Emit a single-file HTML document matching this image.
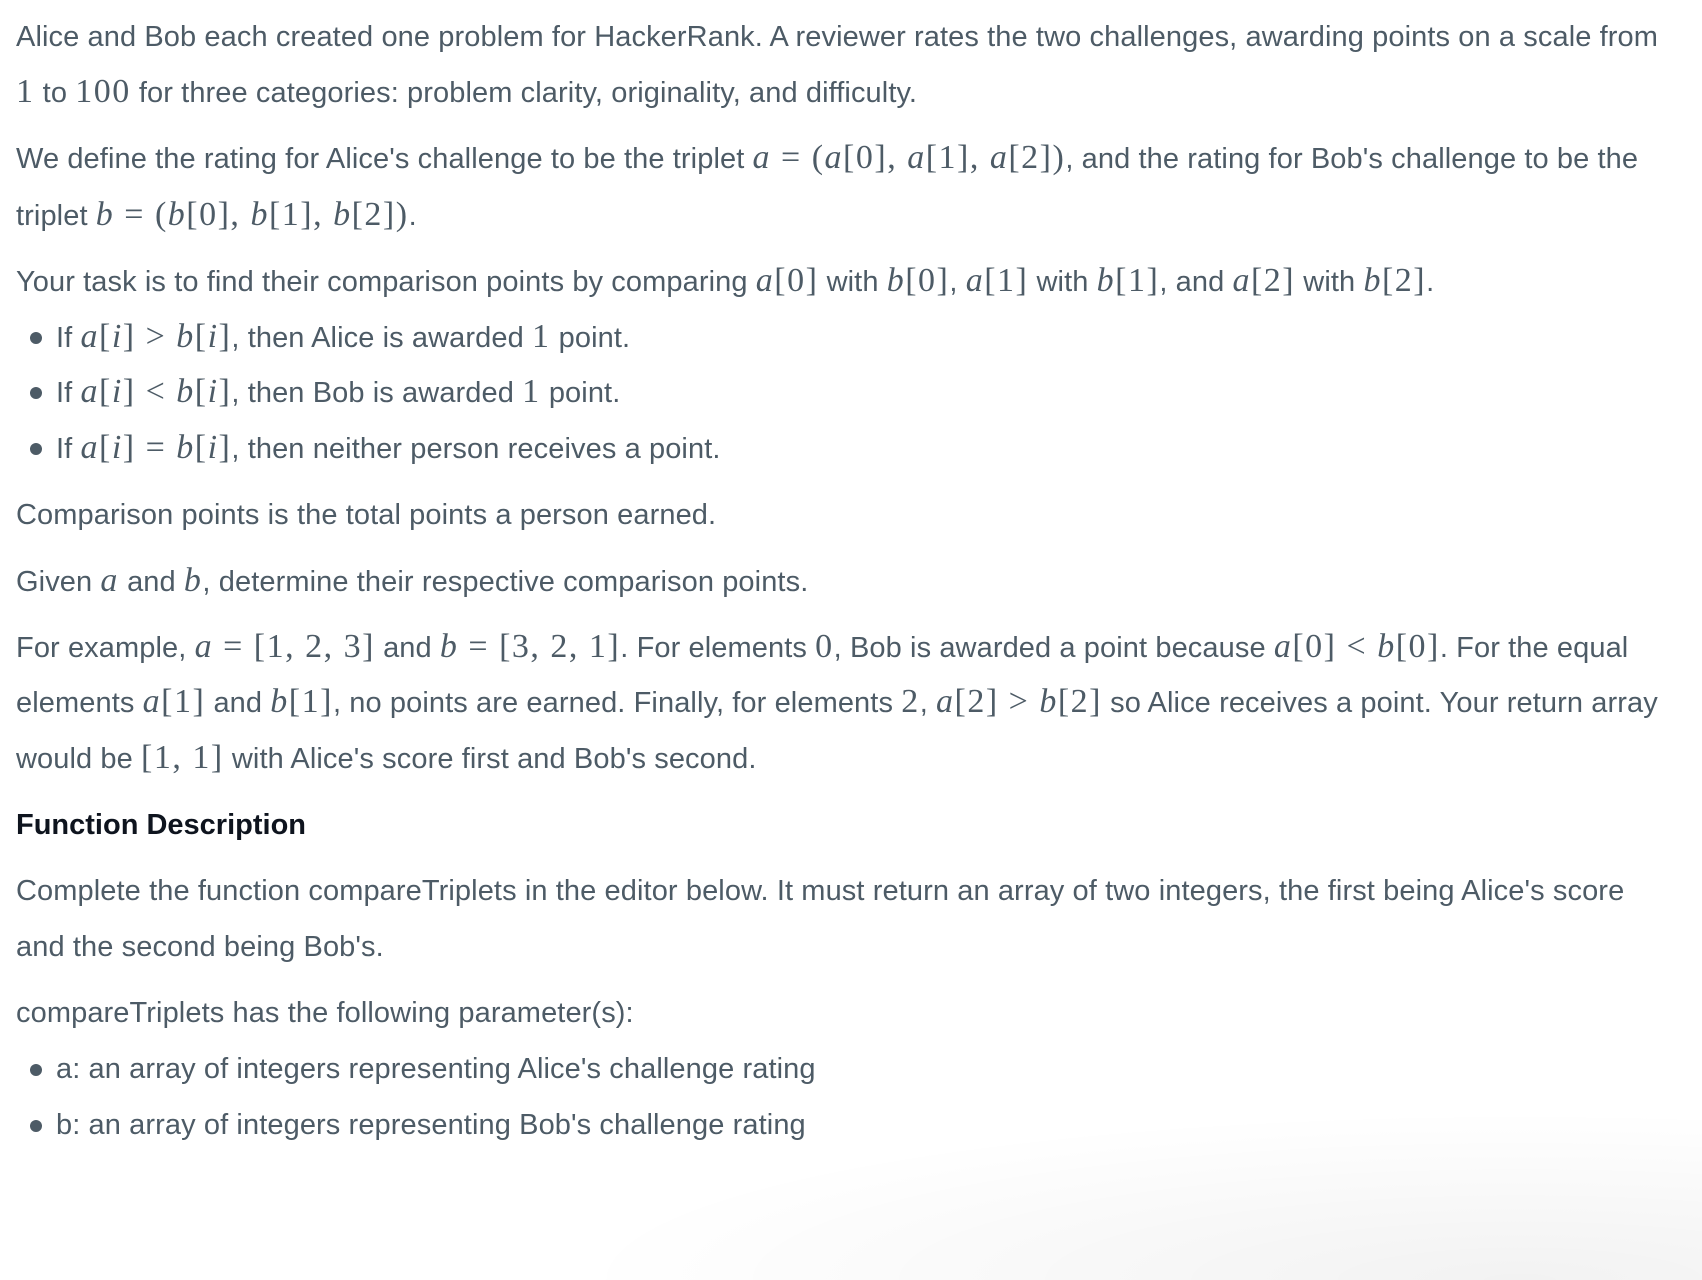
<!DOCTYPE html>
<html><head><meta charset="utf-8"><style>
html,body{margin:0;padding:0;background:#fff;}
body{width:1702px;height:1164px;position:relative;overflow:hidden;font-family:"Liberation Sans",sans-serif;color:#4d5b66;font-size:29px;}
.l{position:absolute;left:16px;height:56px;line-height:56px;white-space:nowrap;letter-spacing:0.1px;}
.b{left:56px;}
.b::before{content:"";position:absolute;left:-26px;top:23px;width:12px;height:12px;border-radius:50%;background:#4d5b66;}
.m{font-family:"Liberation Serif",serif;font-size:34px;letter-spacing:1.5px;}
.m i{font-style:italic;}
h3{position:absolute;left:16px;margin:0;font-size:29px;font-weight:bold;color:#0e141e;line-height:56px;top:797px;}
.fade{position:absolute;left:400px;top:1080px;width:1400px;height:200px;background:radial-gradient(ellipse at 80% 100%,rgba(0,0,0,0.05),rgba(0,0,0,0) 60%);}
</style></head><body>
<div class="l" style="top:9px">Alice and Bob each created one problem for HackerRank. A reviewer rates the two challenges, awarding points on a scale from</div>
<div class="l" style="top:64px"><span class="m">1</span> to <span class="m">100</span> for three categories: problem clarity, originality, and difficulty.</div>
<div class="l" style="top:130px">We define the rating for Alice's challenge to be the triplet <span class="m"><i>a</i> = (<i>a</i>[0], <i>a</i>[1], <i>a</i>[2])</span>, and the rating for Bob's challenge to be the</div>
<div class="l" style="top:187px">triplet <span class="m"><i>b</i> = (<i>b</i>[0], <i>b</i>[1], <i>b</i>[2])</span>.</div>
<div class="l" style="top:253px">Your task is to find their comparison points by comparing <span class="m"><i>a</i>[0]</span> with <span class="m"><i>b</i>[0]</span>, <span class="m"><i>a</i>[1]</span> with <span class="m"><i>b</i>[1]</span>, and <span class="m"><i>a</i>[2]</span> with <span class="m"><i>b</i>[2]</span>.</div>
<div class="l b" style="top:309px">If <span class="m"><i>a</i>[<i>i</i>] &gt; <i>b</i>[<i>i</i>]</span>, then Alice is awarded <span class="m">1</span> point.</div>
<div class="l b" style="top:364px">If <span class="m"><i>a</i>[<i>i</i>] &lt; <i>b</i>[<i>i</i>]</span>, then Bob is awarded <span class="m">1</span> point.</div>
<div class="l b" style="top:420px">If <span class="m"><i>a</i>[<i>i</i>] = <i>b</i>[<i>i</i>]</span>, then neither person receives a point.</div>
<div class="l" style="top:487px">Comparison points is the total points a person earned.</div>
<div class="l" style="top:553px">Given <span class="m"><i>a</i></span> and <span class="m"><i>b</i></span>, determine their respective comparison points.</div>
<div class="l" style="top:619px">For example, <span class="m"><i>a</i> = [1, 2, 3]</span> and <span class="m"><i>b</i> = [3, 2, 1]</span>. For elements <span class="m">0</span>, Bob is awarded a point because <span class="m"><i>a</i>[0] &lt; <i>b</i>[0]</span>. For the equal</div>
<div class="l" style="top:674px">elements <span class="m"><i>a</i>[1]</span> and <span class="m"><i>b</i>[1]</span>, no points are earned. Finally, for elements <span class="m">2</span>, <span class="m"><i>a</i>[2] &gt; <i>b</i>[2]</span> so Alice receives a point. Your return array</div>
<div class="l" style="top:730px">would be <span class="m">[1, 1]</span> with Alice's score first and Bob's second.</div>
<h3>Function Description</h3>
<div class="l" style="top:863px">Complete the function compareTriplets in the editor below. It must return an array of two integers, the first being Alice's score</div>
<div class="l" style="top:919px">and the second being Bob's.</div>
<div class="l" style="top:985px">compareTriplets has the following parameter(s):</div>
<div class="l b" style="top:1041px">a: an array of integers representing Alice's challenge rating</div>
<div class="l b" style="top:1097px">b: an array of integers representing Bob's challenge rating</div>
<div class="fade"></div>
</body></html>
